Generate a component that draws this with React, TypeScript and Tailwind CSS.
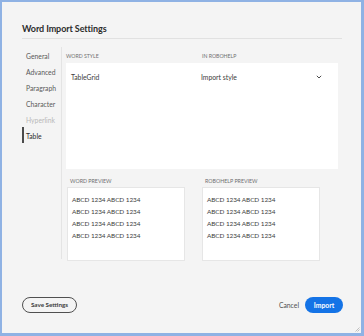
const navItems = ['General', 'Advanced', 'Paragraph', 'Character', 'Hyperlink', 'Table'];

const previewLines = ['ABCD 1234 ABCD 1234', 'ABCD 1234 ABCD 1234', 'ABCD 1234 ABCD 1234', 'ABCD 1234 ABCD 1234'];

function PreviewBox({ label, width, offset }: { label: string; width: string; offset: string }) {
  return (
    <div className={`${width} ${offset} flex flex-col`}>
      <div className="h-[12px] pl-[3px] text-[5.3px] leading-[12px] text-[#707070]">{label}</div>
      <div className="h-[74px] border border-[#e6e6e6] bg-white pt-[6px] pl-[4px]">
        {previewLines.map((line, i) => (
          <div key={i} className="h-[12px] text-[6.4px] leading-[12px] tracking-[-0.01em] text-[#3c3c3c]">
            {line}
          </div>
        ))}
      </div>
    </div>
  );
}

export default function App() {
  return (
    <div className="w-[364px] h-[336px] bg-[#8fb2e4] pt-[2px] pl-[2px] pr-[3px] pb-[3px] font-['Lato',sans-serif]">
      <div className="relative h-full bg-[#f4f4f4] flex flex-col">
        {/* Header */}
        <div className="pl-[20px] pr-[19px] pt-[19px]">
          <div className="h-[16px] text-[9px] leading-[16px] font-bold tracking-[-0.01em] text-[#2c2c2c]">
            Word Import Settings
          </div>
          <div className="mt-[1px] h-px bg-[#e1e1e1]" />
        </div>

        {/* Body */}
        <div className="mt-[8px] ml-[20px] flex">
          <div className="w-[40px] h-[212px] border-r border-[#e4e4e4] flex flex-col">
            {navItems.map((item) => {
              const active = item === 'Table';
              const disabled = item === 'Hyperlink';
              return (
                <div
                  key={item}
                  className={`h-[16px] pt-[2px] text-[6.8px] leading-[14px] ${
                    active
                      ? 'border-l-2 border-[#4b4b4b] pl-[2px] text-[#2c2c2c]'
                      : disabled
                        ? 'pl-[4px] text-[#b8b8b8]'
                        : 'pl-[4px] text-[#5a5a5a]'
                  }`}
                >
                  {item}
                </div>
              );
            })}
          </div>

          <div className="pl-[4px] flex flex-col">
            <div className="pt-[3px] h-[16px] flex text-[5.2px] leading-[13px] text-[#707070]">
              <div className="w-[136px]">WORD STYLE</div>
              <div>IN ROBOHELP</div>
            </div>
            <div className="w-[272px] h-[106px] bg-white flex pt-[7px] pr-[16px] text-[6.8px] leading-[14px] text-[#3c3c3c]">
              <div className="w-[135px] pl-[5px]">TableGrid</div>
              <div className="flex-1">Import style</div>
              <svg width="6" height="14" viewBox="0 0 6 14">
                <path d="M0.8 5.8 L3 8 L5.2 5.8" fill="none" stroke="#4b4b4b" strokeWidth="1" />
              </svg>
            </div>

            <div className="mt-[6px] flex">
              <PreviewBox label="WORD PREVIEW" width="w-[118px]" offset="ml-[1px]" />
              <PreviewBox label="ROBOHELP PREVIEW" width="w-[118px]" offset="ml-[17px]" />
            </div>
          </div>
        </div>

        {/* Footer */}
        <div className="mt-auto pb-[20px] pl-[20px] pr-[18px] flex items-center">
          <button className="h-[16px] w-[55px] rounded-full border-[1.5px] border-[#505050] text-[6.3px] font-bold text-[#3c3c3c]">
            Save Settings
          </button>
          <div className="ml-auto text-[6.8px] text-[#505050]">Cancel</div>
          <button className="ml-[6px] h-[16px] w-[38px] rounded-full bg-[#1473e6] text-[6.8px] font-bold text-white">
            Import
          </button>
        </div>

        {/* Resize grip */}
        <svg width="5" height="5" viewBox="0 0 5 5" className="absolute right-[1px] bottom-[1px]">
          <path d="M4.5 0.5 L0.5 4.5 M4.5 2.5 L2.5 4.5" stroke="#a8a8a8" strokeWidth="0.7" />
        </svg>
      </div>
    </div>
  );
}
